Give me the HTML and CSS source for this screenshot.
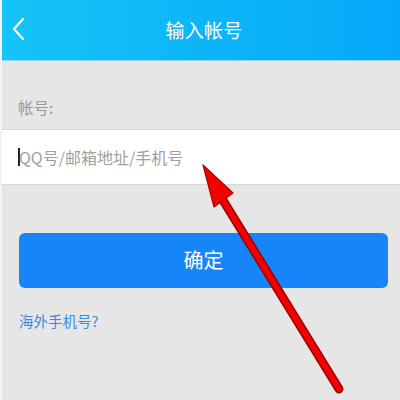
FILE: index.html
```html
<!DOCTYPE html>
<html lang="zh">
<head>
<meta charset="utf-8">
<link rel="stylesheet" href="styles.css">
</head>
<body>
<div class="app">
  <header class="topbar">
    <svg class="back" width="14" height="24" viewBox="0 0 14 24"><path d="M11 2 L2 12 L11 22" fill="none" stroke="#fff" stroke-width="2.2" stroke-linecap="round" stroke-linejoin="round"/></svg>
    <h1 class="title">输入帐号</h1>
  </header>
  <main class="content">
    <div class="label">帐号:</div>
    <div class="field">
      <span class="caret"></span><span class="placeholder">QQ号/邮箱地址/手机号</span>
    </div>
    <div class="actions">
      <div class="btn">确定</div>
      <div class="link">海外手机号?</div>
    </div>
  </main>
  <svg class="arrow" width="400" height="400" viewBox="0 0 400 400">
    <line x1="221" y1="197" x2="339" y2="389" stroke="#9a0000" stroke-width="9" stroke-linecap="round"/>
    <line x1="221" y1="197" x2="339" y2="389" stroke="#f20000" stroke-width="6" stroke-linecap="round"/>
    <polygon points="203,165 214,207 233,193" fill="#f20000" stroke="#b00000" stroke-width="1.2" stroke-linejoin="round"/>
  </svg>
</div>
</body>
</html>
```
FILE: styles.css
```css
html, body {
  margin: 0;
  padding: 0;
  background: #e6e6e6;
}
body {
  font-family: "Noto Sans CJK SC", "Noto Sans", sans-serif;
}
.app {
  position: relative;
  width: 398px;
  height: 400px;
  border-left: 2px solid #f3f3f3;
  background: #e6e6e6;
  overflow: hidden;
}
.topbar {
  height: 60px;
  display: flex;
  align-items: center;
  justify-content: center;
  position: relative;
  background: linear-gradient(90deg, #16c4f6 0%, #0db5f8 50%, #07a8f9 100%);
  border-bottom: 1px solid #8fd8f6;
}
.back {
  position: absolute;
  left: 10px;
  top: 17px;
}
.title {
  margin: 0 0 2px 6px;
  font-size: 19px;
  font-weight: normal;
  color: #fff;
  letter-spacing: 0.3px;
}
.content {
  display: flex;
  flex-direction: column;
}
.label {
  height: 68px;
  display: flex;
  align-items: center;
  padding: 24px 0 0 16px;
  box-sizing: border-box;
  font-size: 15.5px;
  color: #9a9a9a;
}
.field {
  height: 54px;
  background: #fff;
  border-top: 1px solid #d6d6d6;
  border-bottom: 1px solid #d6d6d6;
  display: flex;
  align-items: center;
  padding-left: 16px;
}
.caret {
  width: 2px;
  height: 18px;
  background: #222;
  margin-right: 0;
}
.placeholder {
  font-size: 16px;
  color: #a0a0a0;
  margin-left: -1px;
}
.actions {
  padding: 48px 12px 0 17px;
  display: flex;
  flex-direction: column;
}
.btn {
  height: 55px;
  border-radius: 6px;
  background: #1784f7;
  color: #fff;
  font-size: 20px;
  display: flex;
  align-items: center;
  justify-content: center;
  padding-bottom: 2px;
  box-sizing: border-box;
}
.link {
  margin-top: 22px;
  font-size: 14.5px;
  color: #3a8ae0;
}
.arrow {
  position: absolute;
  left: -2px;
  top: 0;
  pointer-events: none;
}
```
